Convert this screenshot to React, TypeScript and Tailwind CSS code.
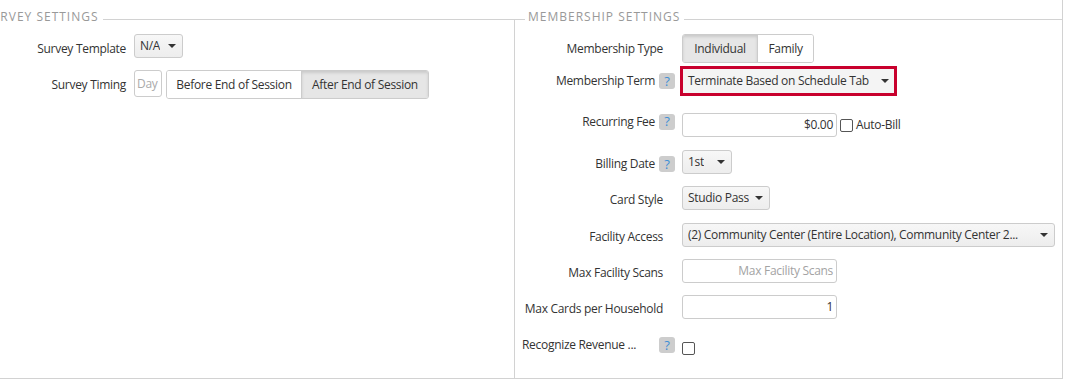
import React from 'react';

const Caret = () => (
  <span className="ml-auto h-0 w-0 shrink-0 border-x-[4px] border-t-[4px] border-x-transparent border-t-[#333]" />
);

const Help = () => (
  <span className="inline-flex h-[16px] w-[16px] items-center justify-center rounded-[3px] bg-[#cdcdcd] text-[13px] leading-none tracking-normal text-[#3f8fd6]">
    ?
  </span>
);

const Select = ({ text, className = '' }: { text: string; className?: string }) => (
  <div
    className={`flex h-[24px] items-center gap-[6px] rounded-[3px] border border-[#ccc] bg-gradient-to-b from-[#f7f7f7] to-[#ededed] pl-[5px] pr-[6px] text-[#333] ${className}`}
  >
    <span className="overflow-hidden whitespace-nowrap">{text}</span>
    <Caret />
  </div>
);

const TextInput = ({ value, placeholder }: { value?: string; placeholder?: string }) => (
  <div className="flex h-[24px] w-[155px] items-center justify-end rounded-[3px] border border-[#ccc] bg-white pr-[3px]">
    {value ? <span className="text-[#333]">{value}</span> : <span className="text-[#a3a3a3]">{placeholder}</span>}
  </div>
);

const Checkbox = () => (
  <span className="inline-block h-[13px] w-[13px] rounded-[2px] border border-[#555] bg-white" />
);

const Legend = ({ text, lead }: { text: string; lead: string }) => (
  <div className="flex h-[20px] items-end">
    <div className={`h-px ${lead} bg-[#d2d2d2]`} />
    <span className="mb-[-4px] ml-[3px] whitespace-nowrap text-[12px] leading-[14px] tracking-[1px] text-[#999]">
      {text}
    </span>
    <div className="ml-[4px] h-px flex-1 bg-[#d2d2d2]" />
  </div>
);

function RightRow({
  label,
  help,
  mt,
  lh = 'h-[28px]',
  children,
}: {
  label: string;
  help?: boolean;
  mt: string;
  lh?: string;
  children: React.ReactNode;
}) {
  return (
    <div className={`flex items-start ${mt}`}>
      <div className={`flex w-[153px] items-center justify-end ${lh} ${help ? '' : 'pr-[12px]'}`}>
        <span className="whitespace-nowrap">{label}</span>
        {help && (
          <span className="ml-[4px] flex">
            <Help />
          </span>
        )}
      </div>
      <div className="ml-[7px]">{children}</div>
    </div>
  );
}

export default function App() {
  return (
    <div className="h-[384px] w-[1071px] overflow-hidden bg-white font-['Open_Sans',sans-serif] text-[12px] tracking-[-0.3px] text-[#333]">
      <div className="ml-[-28px] flex h-[379px] w-[1091px] border-b border-r border-[#d2d2d2]">
        {/* Survey settings */}
        <div className="flex w-[542px] flex-col">
          <Legend text="SURVEY SETTINGS" lead="w-[8px]" />
          <div className="flex flex-col">
            <div className="mt-[14px] flex items-start">
              <div className="flex h-[29px] w-[154px] items-center justify-end whitespace-nowrap">Survey Template</div>
              <div className="ml-[8px]">
                <Select text="N/A" className="h-[23px] w-[49px]" />
              </div>
            </div>
            <div className="mt-[7px] flex items-start">
              <div className="flex h-[29px] w-[154px] items-center justify-end whitespace-nowrap">Survey Timing</div>
              <div className="ml-[8px] flex items-start gap-[4px]">
                <div className="flex h-[27px] w-[28px] items-center overflow-hidden rounded-[3px] border border-[#ccc] pl-[2px] text-[#aaa]">
                  Day
                </div>
                <div className="flex h-[29px] overflow-hidden rounded-[3px] border border-[#ccc]">
                  <div className="flex w-[134px] items-center justify-center whitespace-nowrap bg-white">
                    Before End of Session
                  </div>
                  <div className="flex w-[127px] items-center justify-center whitespace-nowrap border-l border-[#ccc] bg-[#e6e6e6] shadow-[inset_0_2px_3px_rgba(0,0,0,0.12)]">
                    After End of Session
                  </div>
                </div>
              </div>
            </div>
          </div>
        </div>

        {/* Membership settings */}
        <div className="flex flex-1 flex-col">
          <Legend text="MEMBERSHIP SETTINGS" lead="w-[11px]" />
          <div className="flex flex-1 flex-col border-l border-[#d2d2d2] pl-[7px]">
            <RightRow label="Membership Type" mt="mt-[14px]" lh="h-[29px]">
              <div className="flex h-[29px] overflow-hidden rounded-[3px] border border-[#ccc]">
                <div className="flex w-[74px] items-center justify-center bg-[#e6e6e6] shadow-[inset_0_2px_3px_rgba(0,0,0,0.12)]">
                  Individual
                </div>
                <div className="flex w-[56px] items-center justify-center border-l border-[#ccc] bg-white">Family</div>
              </div>
            </RightRow>

            <RightRow label="Membership Term" help mt="mt-[3px]" lh="h-[30px]">
              <div className="ml-[-2px] flex h-[30px] w-[217px] items-center gap-[6px] border-[3px] border-[#c8002d] bg-[#f4f4f4] pl-[5px] pr-[5px]">
                <span className="whitespace-nowrap">Terminate Based on Schedule Tab</span>
                <Caret />
              </div>
            </RightRow>

            <RightRow label="Recurring Fee" help mt="mt-[17px]" lh="h-[17px]">
              <div className="flex items-center">
                <TextInput value="$0.00" />
                <span className="ml-[3px] flex">
                  <Checkbox />
                </span>
                <span className="ml-[3px] whitespace-nowrap">Auto-Bill</span>
              </div>
            </RightRow>

            <RightRow label="Billing Date" help mt="mt-[13px]">
              <Select text="1st" className="h-[23px] w-[50px]" />
            </RightRow>

            <RightRow label="Card Style" mt="mt-[8px]">
              <Select text="Studio Pass" />
            </RightRow>

            <RightRow label="Facility Access" mt="mt-[9px]">
              <Select
                text="(2) Community Center (Entire Location), Community Center 2..."
                className="h-[23px] w-[373px]"
              />
            </RightRow>

            <RightRow label="Max Facility Scans" mt="mt-[8px]">
              <TextInput placeholder="Max Facility Scans" />
            </RightRow>

            <RightRow label="Max Cards per Household" mt="mt-[8px]">
              <TextInput value="1" />
            </RightRow>

            <div className="mt-[8px] flex items-start">
              <div className="flex h-[28px] w-[153px] items-center justify-between">
                <span className="whitespace-nowrap">Recognize Revenue ...</span>
                <Help />
              </div>
              <div className="ml-[7px] mt-[11px] flex">
                <Checkbox />
              </div>
            </div>
          </div>
        </div>
      </div>
    </div>
  );
}
